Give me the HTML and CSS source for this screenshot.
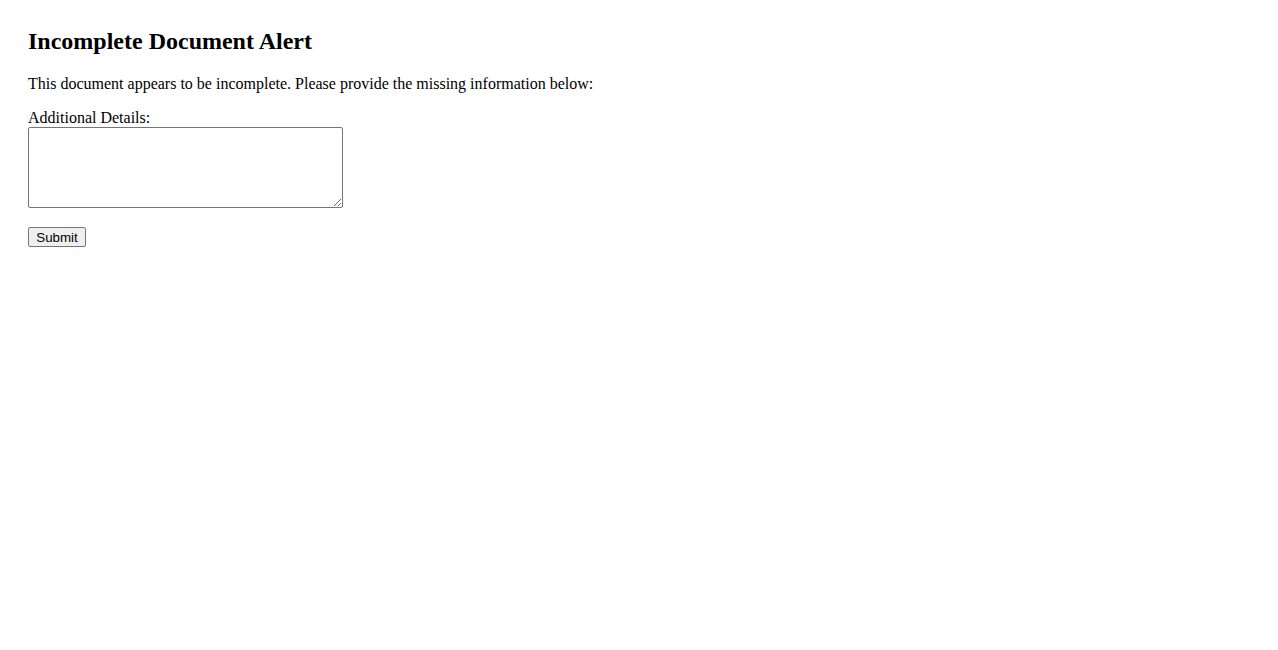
FILE: index.html
```html
<!DOCTYPE html>
<html lang="en">
<head>
  <meta charset="UTF-8">
  <meta name="viewport" content="width=device-width, initial-scale=1.0">
  <title>Incomplete Document Alert</title>
  <link rel="stylesheet" href="styles.css">
</head>
<body>
  <h2 class="title">Incomplete Document Alert</h2>
  <p class="intro">This document appears to be incomplete. Please provide the missing information below:</p>

  <form class="details-form" onsubmit="return false;">
    <label for="details" class="field-label">Additional Details:</label>
    <textarea id="details" name="details" class="field-input"></textarea>
    <button type="submit" class="submit-btn">Submit</button>
  </form>
</body>
</html>
```

FILE: styles.css
```css
body {
  margin: 0;
  padding: 28px;
  font-family: "Liberation Serif", "Times New Roman", serif;
  font-size: 16px;
  color: #000;
  background-color: #fff;
}
.title {
  font-size: 24px;
  font-weight: bold;
  margin: 0 0 20px;
}
.intro {
  margin: 0 0 16px;
}
.field-label {
  display: block;
}
.field-input {
  display: block;
  box-sizing: border-box;
  width: 315px;
  height: 81px;
  margin: 0;
  border: 1px solid #767676;
  border-radius: 2px;
  font-family: "Liberation Mono", monospace;
  font-size: 13px;
}
.submit-btn {
  display: block;
  box-sizing: border-box;
  min-width: 58px;
  height: 20px;
  margin-top: 19px;
  font-family: "Liberation Sans", Arial, sans-serif;
  font-size: 13.33px;
  padding: 1px 7px;
  border: 1px solid #767676;
  border-radius: 2px;
  background-color: #efefef;
  color: #000;
}
```
